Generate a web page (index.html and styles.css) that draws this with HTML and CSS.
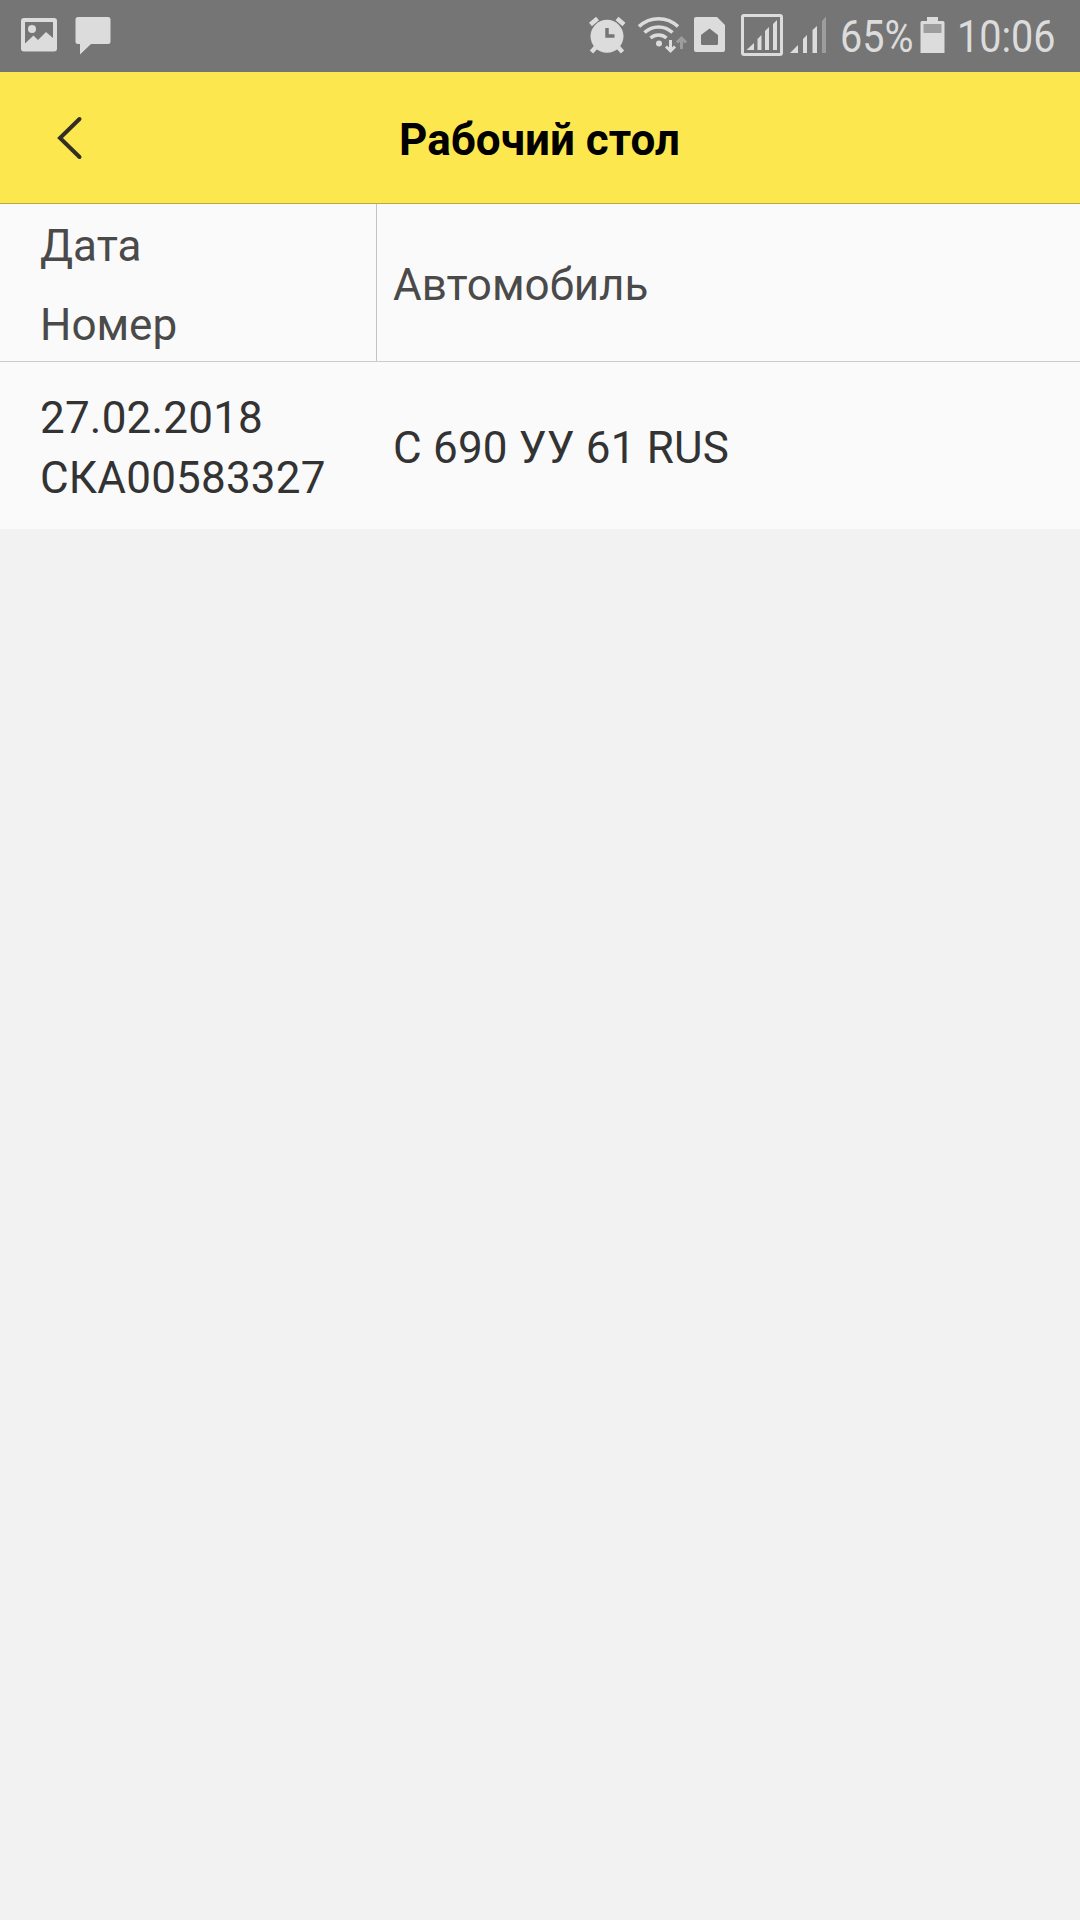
FILE: index.html
```html
<!DOCTYPE html>
<html lang="ru">

<head>
    <meta charset="UTF-8">
    <meta name="viewport" content="width=device-width, initial-scale=1.0">
    <title>Рабочий стол</title>
    <link rel="stylesheet" href="styles.css">
</head>

<body>
    <div class="status-bar">
        <div class="status-left">
            <svg class="icon" width="36" height="72" viewBox="0 0 36 72">
                <path fill-rule="evenodd" d="M3 18h30a3 3 0 0 1 3 3v27.500a3 3 0 0 1-3 3H3a3 3 0 0 1-3-3V21a3 3 0 0 1 3-3zM4 22v21.500l8.500-8 4.500 4.500 8-8 7 6V22z"/>
                <circle cx="11" cy="29" r="4"/>
            </svg>
            <svg class="icon" width="36" height="72" viewBox="0 0 36 72">
                <path d="M3 17h30a2.500 2.500 0 0 1 2.500 2.500v22A2.500 2.500 0 0 1 33 44H16L5 54.500V44H3a2.500 2.500 0 0 1-2.500-2.500v-22A2.500 2.500 0 0 1 3 17z"/>
            </svg>
        </div>
        <div class="status-right">
            <svg class="icon alarm" width="37" height="72" viewBox="0 0 37 72">
                <circle cx="18" cy="36.300" r="16.500"/>
                <path class="line" stroke-width="4.500" d="M1.500 24.500l7-6M28 18.500l7 6M7 47l-4.500 5M29 47l4.500 5"/>
                <path class="cut" d="M18 28v8h7.500"/>
            </svg>
            <svg class="icon wifi" width="49" height="72" viewBox="0 0 49 72">
                <path class="line" stroke-width="3.500" d="M1 26.500c11-10.500 28-10.500 39 0M6.500 32.500c8-7.500 20-7.500 28 0M12.500 38c4.500-4 11.500-4 16 0"/>
                <circle cx="21" cy="43.500" r="3"/>
                <path class="line" stroke-width="3" d="M32.500 40v11M28 46.500l4.500 4.500 4.500-4.500"/>
                <path class="line dim" stroke-width="3" d="M43.500 49V38M39 42.500l4.500-4.500 4.500 4.500"/>
            </svg>
            <svg class="icon sim" width="31" height="72" viewBox="0 0 31 72">
                <path fill-rule="evenodd" d="M2 17h21l8 8v25a2 2 0 0 1-2 2H2a2 2 0 0 1-2-2V19a2 2 0 0 1 2-2zM15.500 28.500L7 35v8.500a1.500 1.500 0 0 0 1.500 1.500h14a1.500 1.500 0 0 0 1.500-1.500V35z"/>
            </svg>
            <svg class="icon signal-box" width="42" height="72" viewBox="0 0 42 72">
                <rect class="line" stroke-width="3" x="1.500" y="15.500" width="39" height="39" rx="1.500"/>
                <path d="M5.500 50l7.500-7v7zM16.500 50V39l4-4v15zM24 50V31l4-4v23zM32 50V24l4-4v30z"/>
            </svg>
            <svg class="icon signal" width="37" height="72" viewBox="0 0 37 72">
                <path d="M0 53l8-8v8zM13 53V39l4-4v18zM22.500 53V30l4.500-4v27z"/>
                <path class="dim-fill" d="M32 53V21l4-4.500V53z"/>
            </svg>
            <span class="percent">65%</span>
            <svg class="icon battery" width="25" height="72" viewBox="0 0 25 72">
                <path d="M7 17h11v4h5a1.500 1.500 0 0 1 1.500 1.500V53H.5V22.500A1.500 1.500 0 0 1 2 21h5z"/>
                <path class="empty" d="M3.500 24h18v9h-18z"/>
            </svg>
            <span class="time">10:06</span>
        </div>
    </div>

    <div class="header">
        <a class="back" href="#">
            <svg width="26" height="46" viewBox="0 0 26 46">
                <path d="M22.500 4L3 23l19.500 19"/>
            </svg>
        </a>
        <h1>Рабочий стол</h1>
    </div>

    <div class="table">
        <div class="row table-head">
            <div class="cell cell-date">
                <div>Дата</div>
                <div>Номер</div>
            </div>
            <div class="cell cell-car">Автомобиль</div>
        </div>
        <div class="row table-item">
            <div class="cell cell-date">
                <div>27.02.2018</div>
                <div>СКА00583327</div>
            </div>
            <div class="cell cell-car">С 690 УУ 61 RUS</div>
        </div>
    </div>
</body>

</html>
```
FILE: styles.css
```css
* {
    box-sizing: border-box;
}

body {
    margin: 0;
    min-height: 100vh;
    font-family: Roboto, sans-serif;
    font-size: 44px;
    background-color: #f2f2f2;
}

.status-bar {
    display: flex;
    justify-content: space-between;
    height: 72px;
    padding: 0 22px 0 21px;
    background-color: #757575;
    color: #dcdcdc;
}

.status-left,
.status-right {
    display: flex;
}

.status-left {
    gap: 18px;
}

.icon {
    display: block;
    flex: none;
    fill: #dcdcdc;
}

.icon .line {
    fill: none;
    stroke: #dcdcdc;
}

.icon .cut {
    fill: none;
    stroke: #757575;
    stroke-width: 3.5;
}

.icon .dim {
    stroke: #9d9d9d;
}

.icon .dim-fill,
.icon .empty {
    fill: #9d9d9d;
}

.alarm {
    margin-right: 12px;
}

.wifi {
    margin-right: 7px;
}

.sim {
    margin-right: 16px;
}

.signal-box {
    margin-right: 7px;
}

.signal {
    margin-right: 13px;
}

.battery {
    margin-right: 12px;
}

.percent,
.time {
    font-size: 45px;
    line-height: 74px;
    white-space: nowrap;
    transform: scaleX(0.88);
    transform-origin: left;
}

.percent {
    width: 80px;
}

.time {
    width: 101px;
}

.header {
    display: grid;
    grid-template-columns: 140px 1fr 140px;
    align-items: center;
    height: 132px;
    background-color: #fce74f;
    border-bottom: 1px solid #b5a93f;
}

.header h1 {
    margin: 0;
    padding: 4px 1px 0 0;
    font-size: 44px;
    font-weight: 700;
    text-align: center;
    color: #000000;
}

.back {
    padding-left: 57px;
}

.back svg {
    display: block;
    fill: none;
    stroke: #332e24;
    stroke-width: 4;
    stroke-linecap: round;
}

.row {
    display: flex;
    background-color: #fafafa;
}

.cell {
    display: flex;
    flex-direction: column;
    justify-content: center;
    padding-top: 5px;
}

.cell-date {
    width: 377px;
    padding-left: 40px;
}

.cell-car {
    flex: 1;
    padding-left: 16px;
}

.table-head {
    height: 158px;
    color: #4a4a4a;
    line-height: 79px;
    border-bottom: 1px solid #cccccc;
}

.table-head .cell-date {
    padding-top: 7px;
    border-right: 1px solid #c4c4c4;
}

.table-item {
    height: 167px;
    color: #333333;
    line-height: 60px;
    letter-spacing: 0.2px;
}
```
